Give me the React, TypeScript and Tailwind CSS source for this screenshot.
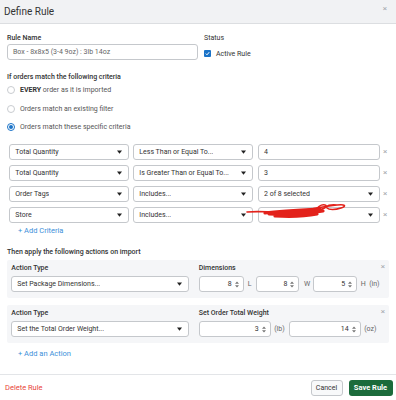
import { ReactNode } from 'react'

const criteria = [
  { field: 'Total Quantity', op: 'Less Than or Equal To...', value: '4', select: false },
  { field: 'Total Quantity', op: 'Is Greater Than or Equal To...', value: '3', select: false },
  { field: 'Order Tags', op: 'Includes...', value: '2 of 8 selected', select: true },
  { field: 'Store', op: 'Includes...', value: '', select: true },
]

function Arrow() {
  return (
    <svg width="5" height="4" viewBox="0 0 5 4" className="shrink-0">
      <path d="M0 0.5h5L2.5 3.8z" fill="#222" />
    </svg>
  )
}

function Select({ children, className = '' }: { children?: ReactNode; className?: string }) {
  return (
    <div
      className={`h-[16px] flex items-center justify-between pl-[5px] pr-[6px] border border-[#c5c8cc] rounded-[3px] bg-white text-[#333] ${className}`}
    >
      <span className="truncate">{children}</span>
      <Arrow />
    </div>
  )
}

function TextBox({ children, className = '' }: { children?: ReactNode; className?: string }) {
  return (
    <div className={`h-[16px] flex items-center px-[5px] border border-[#c5c8cc] rounded-[3px] bg-white text-[#333] ${className}`}>
      {children}
    </div>
  )
}

function NumBox({ value, className = '' }: { value: string; className?: string }) {
  return (
    <div className={`h-[16px] flex items-center justify-end gap-[3px] pr-[4px] border border-[#c5c8cc] rounded-[3px] bg-white text-[#333] ${className}`}>
      <span>{value}</span>
      <svg width="4" height="7" viewBox="0 0 4 7">
        <path d="M0 2.8h4L2 0.4z M0 4.2h4L2 6.6z" fill="#777" />
      </svg>
    </div>
  )
}

function Close({ className = '' }: { className?: string }) {
  return <span className={`text-[#a4a8ad] text-[8px] leading-none ${className}`}>×</span>
}

function Radio({ checked, children }: { checked?: boolean; children: ReactNode }) {
  return (
    <div className="h-[10px] flex items-center gap-[5px]">
      <span
        className={`w-[8px] h-[8px] rounded-full border flex items-center justify-center ${
          checked ? 'border-[#1a73c8]' : 'border-[#c9ccd0]'
        }`}
      >
        {checked && <span className="w-[4px] h-[4px] rounded-full bg-[#1a73c8]" />}
      </span>
      <span className="text-[#555]">{children}</span>
    </div>
  )
}

export default function App() {
  return (
    <div
      className="w-[396px] h-[400px] bg-white flex flex-col text-[7px] leading-[10px] text-[#333] overflow-hidden"
      style={{ fontFamily: 'Roboto, "Liberation Sans", sans-serif' }}
    >
      {/* Header */}
      <div className="h-[24px] shrink-0 bg-[#f1f2f4] border-b border-[#dcdee1] flex items-start justify-between pl-[4px] pr-[9px]">
        <h1 className="text-[10px] leading-[24px] text-[#333]">Define Rule</h1>
        <Close className="mt-[5px]" />
      </div>

      <div className="px-[7px]">
        {/* Rule name + status */}
        <div className="flex gap-[6px] mt-[9px]">
          <div className="w-[191px]">
            <div className="font-medium text-[#333]">Rule Name</div>
            <TextBox className="mt-[1px] text-[#666]">Box - 8x8x5 (3-4 9oz) : 3lb 14oz</TextBox>
          </div>
          <div>
            <div className="text-[#333]">Status</div>
            <div className="flex items-center gap-[5px] mt-[5.5px]">
              <span className="w-[7px] h-[7px] rounded-[1px] bg-[#1a73c8] flex items-center justify-center">
                <svg width="5" height="5" viewBox="0 0 5 5">
                  <path d="M0.8 2.6l1.2 1.2L4.2 1.2" stroke="white" strokeWidth="1" fill="none" />
                </svg>
              </span>
              <span className="text-[#333]">Active Rule</span>
            </div>
          </div>
        </div>

        {/* Match type */}
        <div className="mt-[12px] font-medium">If orders match the following criteria</div>
        <div className="mt-[3px] flex flex-col gap-[8.5px]">
          <Radio>
            <b className="font-bold text-[#333]">EVERY</b> order as it is imported
          </Radio>
          <Radio>Orders match an existing filter</Radio>
          <Radio checked>Orders match these specific criteria</Radio>
        </div>

        {/* Criteria rows */}
        <div className="mt-[11.5px] pl-[2.3px] flex flex-col gap-[5px]">
          {criteria.map((c, i) => (
            <div key={i} className="flex items-center relative">
              <Select className="w-[120px]">{c.field}</Select>
              <Select className="w-[120px] ml-[4px]">{c.op}</Select>
              {c.select ? (
                <Select className="w-[122px] ml-[4.7px]">{c.value}</Select>
              ) : (
                <TextBox className="w-[122px] ml-[4.7px]">{c.value}</TextBox>
              )}
              <Close className="ml-[3px]" />
              {c.field === 'Store' && (
                <svg
                  className="absolute left-[236px] top-[-5px] pointer-events-none"
                  width="104"
                  height="20"
                  viewBox="0 0 104 20"
                >
                  <g stroke="#e3221b" fill="none" strokeLinecap="round" strokeLinejoin="round">
                    <path d="M2 10 C12 9 22 10 32 10" strokeWidth="1.6" />
                    <path d="M20 11 C35 9 55 8 75 7 C62 9 42 11 24 12 C40 13 60 12 78 9 C64 11 46 14 30 14 C46 15 62 14 72 12" strokeWidth="3.2" />
                    <path d="M60 8 C72 6 82 4 92 3 C100 2 102 4 96 6 C90 8 84 8 82 6 C80 4 86 2 92 3" strokeWidth="1.6" />
                    <path d="M70 9 C78 8 84 4 80 3 C76 2 72 6 70 9" strokeWidth="1.6" />
                  </g>
                </svg>
              )}
            </div>
          ))}
        </div>

        <div className="mt-[3.7px] pl-[11px] text-[#3b8fd9] text-[7.5px]">+ Add Criteria</div>

        <div className="mt-[10.6px] font-medium">Then apply the following actions on import</div>

        {/* Action 1 */}
        <div className="mt-[3.7px] bg-[#f5f6f8] rounded-[2px] h-[38px] flex pt-[3px] pl-[4.3px] pr-[5px] relative">
          <div className="w-[178px]">
            <div className="font-medium">Action Type</div>
            <Select className="mt-[3px]">Set Package Dimensions...</Select>
          </div>
          <div className="ml-[9.4px]">
            <div className="font-medium">Dimensions</div>
            <div className="mt-[3px] flex items-center">
              <NumBox value="8" className="w-[45px]" />
              <span className="ml-[4px] text-[#666]">L</span>
              <NumBox value="8" className="w-[43px] ml-[5px]" />
              <span className="ml-[4.5px] text-[#666]">W</span>
              <NumBox value="5" className="w-[44px] ml-[3px]" />
              <span className="ml-[3.5px] text-[#666]">H&nbsp;&nbsp;(in)</span>
            </div>
          </div>
          <Close className="absolute right-[4px] top-[3px]" />
        </div>

        {/* Action 2 */}
        <div className="mt-[6.7px] bg-[#f5f6f8] rounded-[2px] h-[38px] flex pt-[3px] pl-[4.3px] pr-[5px] relative">
          <div className="w-[178px]">
            <div className="font-medium">Action Type</div>
            <Select className="mt-[3px]">Set the Total Order Weight...</Select>
          </div>
          <div className="ml-[9.4px]">
            <div className="font-medium">Set Order Total Weight</div>
            <div className="mt-[3px] flex items-center">
              <NumBox value="3" className="w-[72px]" />
              <span className="ml-[3.5px] text-[#666]">(lb)</span>
              <NumBox value="14" className="w-[72px] ml-[4px]" />
              <span className="ml-[3.5px] text-[#666]">(oz)</span>
            </div>
          </div>
          <Close className="absolute right-[4px] top-[3px]" />
        </div>

        <div className="mt-[5.6px] pl-[11px] text-[#3b8fd9] text-[7.5px]">+ Add an Action</div>
      </div>

      {/* Footer */}
      <div className="mt-auto h-[26px] shrink-0 border-t border-[#e3e5e8] flex items-center justify-between pl-[5px] pr-[3.5px]">
        <span className="text-[#e8443a] text-[7.5px]">Delete Rule</span>
        <div className="flex items-center gap-[6px]">
          <button className="h-[16px] w-[32px] rounded-[3px] border border-[#c5c8cc] bg-[#f8f9fa] text-[#333] text-[7px]">
            Cancel
          </button>
          <button className="h-[16px] w-[44px] rounded-[3px] bg-[#1b6b3b] text-white font-bold text-[7.5px]">
            Save Rule
          </button>
        </div>
      </div>
    </div>
  )
}
